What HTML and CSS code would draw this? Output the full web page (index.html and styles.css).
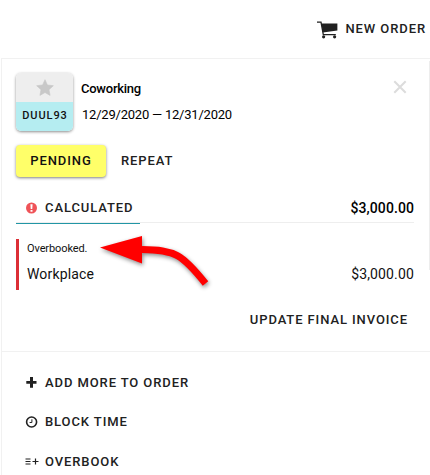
FILE: index.html
```
<!DOCTYPE html>
<html lang="en">
<head>
    <meta charset="utf-8" />
    <meta name="viewport" content="width=device-width, initial-scale=1" />
    <title>Order</title>
    <link rel="stylesheet" href="styles.css">
</head>
<body>
    <div class="page">
        <header class="topbar">
            <svg class="cart" width="21" height="18" viewBox="0 0 21 18">
                <path fill="none" stroke="currentColor" stroke-width="1.3" d="M0 1.2h4L6.3 13.6h12.5" />
                <path fill="currentColor" d="M4.4 2.6h16v7L5.9 11.4z" />
                <circle fill="currentColor" cx="6.6" cy="15.8" r="1.6" />
                <circle fill="currentColor" cx="17.6" cy="15.8" r="1.6" />
            </svg>
            <span class="label new-order">New order</span>
        </header>

        <main class="panel">
            <section class="order">
                <div class="summary">
                    <div class="badge">
                        <div class="badge-star">
                            <svg width="18" height="17" viewBox="0 0 18 17">
                                <path fill="#c8c8c8" stroke="#c8c8c8" stroke-width=".6" stroke-linejoin="round" d="M9 .7l2.4 5.3 5.9.7-4.3 4 1.1 5.7L9 13.5l-5.1 2.9L5 10.7l-4.3-4 5.9-.7z" />
                            </svg>
                        </div>
                        <div class="label badge-code">DUUL93</div>
                    </div>
                    <div class="info">
                        <div class="title">Coworking</div>
                        <div class="dates">12/29/2020 — 12/31/2020</div>
                    </div>
                    <svg class="close" width="14" height="14" viewBox="0 0 14 14">
                        <path fill="none" stroke="#dcdcdc" stroke-width="2" d="M1.3 1.3l11.4 11.4M12.7 1.3L1.3 12.7" />
                    </svg>
                </div>

                <div class="actions">
                    <button class="label pending">Pending</button>
                    <span class="label repeat">Repeat</span>
                </div>

                <div class="total">
                    <div class="tab">
                        <svg width="11" height="12" viewBox="0 0 11 12">
                            <circle fill="#ef5358" cx="5.5" cy="6" r="5.5" />
                            <path fill="#fff" d="M4.4 2.3h2.2l-.3 4.6H4.7zM4.5 7.9h2v1.8h-2z" />
                        </svg>
                        <span class="label calculated">Calculated</span>
                    </div>
                    <span class="total-price">$3,000.00</span>
                </div>

                <div class="item">
                    <div class="warning">Overbooked.</div>
                    <div class="line">
                        <span>Workplace</span>
                        <span class="line-price">$3,000.00</span>
                    </div>
                    <svg class="arrow" width="124" height="66" viewBox="0 0 124 66">
                        <path fill="none" stroke="#f00" stroke-width="7" d="M50 17.5C83 18 90 22 113.5 51.5" />
                        <path fill="#f00" d="M8 15.5L50 4v27.5z" />
                    </svg>
                </div>

                <div class="label invoice">Update final invoice</div>
            </section>

            <ul class="menu">
                <li>
                    <svg width="14" height="12" viewBox="0 0 14 12">
                        <path fill="currentColor" d="M5 0h3v4h3.5v2.8H8v4H5v-4H1.3V4H5z" />
                    </svg>
                    <span class="label add-more">Add more to order</span>
                </li>
                <li>
                    <svg width="14" height="12" viewBox="0 0 14 12">
                        <circle fill="none" stroke="currentColor" stroke-width="1.6" cx="6.6" cy="6" r="5" />
                        <path fill="none" stroke="currentColor" d="M6.9 3.3v3.2H4.6" />
                    </svg>
                    <span class="label block-time">Block time</span>
                </li>
                <li>
                    <svg width="14" height="12" viewBox="0 0 14 12">
                        <path fill="none" stroke="currentColor" stroke-width="1.2" d="M.5 3h5M.5 5.5h5M.5 8h5M7.5 5.5h6M10.5 2.5v6" />
                    </svg>
                    <span class="label overbook">Overbook</span>
                </li>
            </ul>
        </main>
    </div>
</body>
</html>
```

FILE: styles.css
```
* {
    margin: 0;
    padding: 0;
    box-sizing: border-box;
}

body {
    font-family: Roboto, "Liberation Sans", sans-serif;
    font-size: 13px;
    color: #212121;
    background: #fff;
    overflow: hidden;
}

.page {
    height: 475px;
    overflow: hidden;
}

.label {
    font-size: 13px;
    font-weight: 500;
    line-height: 16px;
    letter-spacing: 0.9px;
    text-transform: uppercase;
    white-space: nowrap;
}

.topbar {
    display: flex;
    justify-content: flex-end;
    align-items: center;
    gap: 8px;
    height: 58px;
    padding-right: 4px;
}

.cart {
    margin-top: 2px;
}

.panel {
    margin-left: 1px;
    height: 420px;
    border-top: 1px solid #f1f1f1;
    border-left: 1px solid #f1f1f1;
}

.order {
    height: 293px;
    padding: 14px 16px 0 14px;
    border-bottom: 1px solid #f1f1f1;
    background: linear-gradient(#ededed, #ededed) right 2px / 1px 209px no-repeat;
}

.summary {
    display: flex;
    height: 58px;
}

.badge {
    width: 57px;
    height: 58px;
    border-radius: 5px;
    overflow: hidden;
    box-shadow: 0 1px 3px rgba(0, 0, 0, 0.45);
}

.badge-star {
    display: flex;
    justify-content: center;
    align-items: center;
    height: 29px;
    background: #eee;
}

.badge-code {
    height: 29px;
    padding-left: 1px;
    background: #b5edf1;
    color: #111;
    font-size: 11px;
    line-height: 27px;
    text-align: center;
}

.info {
    flex: 1;
    margin-left: 8px;
    color: #000;
}

.title {
    margin-top: 8px;
    font-weight: 500;
    line-height: 16px;
    letter-spacing: -0.25px;
}

.dates {
    margin: 10px 0 0 1px;
    line-height: 16px;
    letter-spacing: -0.22px;
}

.close {
    margin: 7px 7px 0 0;
}

.actions {
    display: flex;
    align-items: center;
    gap: 15px;
    margin-top: 14px;
}

.pending {
    width: 90px;
    height: 32px;
    border: 0;
    border-radius: 4px;
    background: #ffff69;
    color: #111;
    font-family: inherit;
    box-shadow: 0 1px 3px rgba(0, 0, 0, 0.5);
}

.total {
    display: flex;
    justify-content: space-between;
    height: 46px;
    border-bottom: 1px solid #eee;
}

.tab {
    display: flex;
    align-items: center;
    gap: 8px;
    width: 124px;
    height: 47px;
    padding: 15px 0 0 10px;
    border-bottom: 1px solid #2196a5;
}

.total-price {
    padding-top: 22px;
    color: #000;
    font-size: 14px;
    font-weight: 500;
    line-height: 18px;
    letter-spacing: 0.08px;
}

.item {
    position: relative;
    height: 51px;
    margin-top: 16px;
    padding-left: 8px;
    border-left: 3px solid #dc2f36;
    color: #111;
}

.warning {
    padding-top: 3px;
    font-size: 11px;
    line-height: 14px;
    letter-spacing: -0.1px;
}

.line {
    display: flex;
    justify-content: space-between;
    margin-top: 9px;
    font-size: 14px;
    line-height: 18px;
    letter-spacing: 0.15px;
}

.arrow {
    position: absolute;
    top: -7px;
    left: 73px;
    filter: drop-shadow(1px 2px 2px rgba(0, 0, 0, 0.45));
}

.invoice {
    margin-top: 22px;
    padding-right: 6px;
    text-align: right;
}

.menu {
    list-style: none;
    padding: 11px 0 0 23px;
}

.menu li {
    display: flex;
    align-items: center;
    gap: 6px;
    height: 39.5px;
}
```
